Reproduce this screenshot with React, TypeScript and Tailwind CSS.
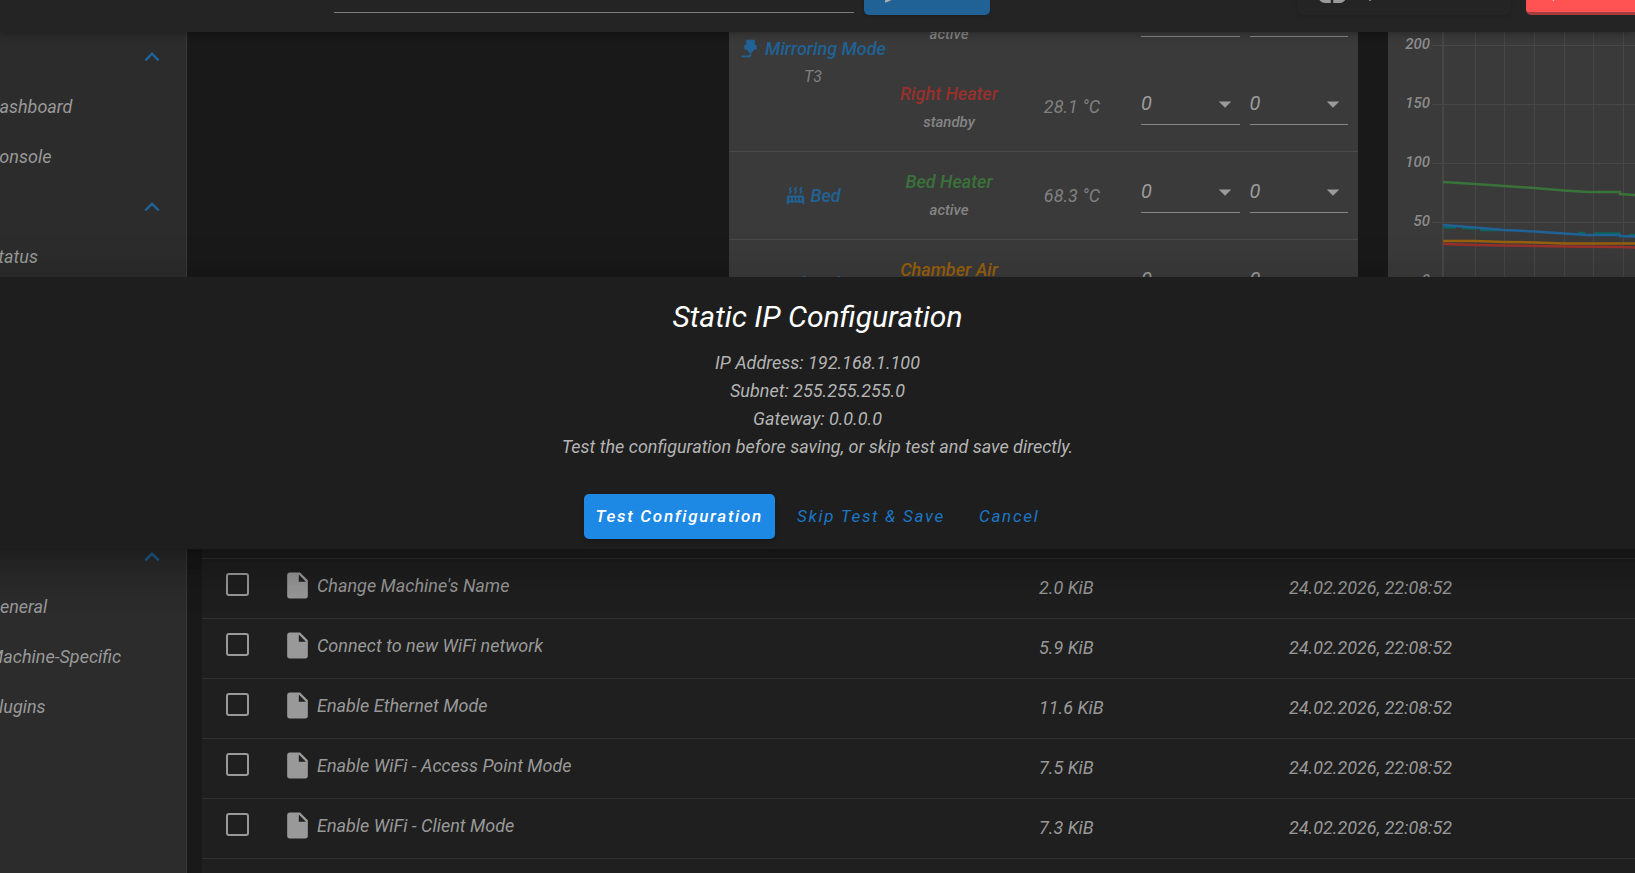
import React, { useState } from 'react';
import { MdArrowDropDown, MdKeyboardArrowUp } from 'react-icons/md';

const files = [
  { name: "Change Machine's Name", size: '2.0 KiB' },
  { name: 'Connect to new WiFi network', size: '5.9 KiB' },
  { name: 'Enable Ethernet Mode', size: '11.6 KiB' },
  { name: 'Enable WiFi - Access Point Mode', size: '7.5 KiB' },
  { name: 'Enable WiFi - Client Mode', size: '7.3 KiB' },
];
const modified = '24.02.2026, 22:08:52';

const gridX = [87, 116, 146, 176, 205, 235];
const ticks = [
  { label: '200', y: 13 },
  { label: '150', y: 72 },
  { label: '100', y: 131 },
  { label: '50', y: 190 },
  { label: '0', y: 249 },
];

// Material Design Icons outlines
const icons = {
  file: 'M13,9V3.5L18.5,9M6,2C4.89,2 4,2.89 4,4V20A2,2 0 0,0 6,22H18A2,2 0 0,0 20,20V8L14,2H6Z',
  nozzle: 'M7,2H17V8H19V13H16.5L13,17H11L7.5,13H5V8H7V2M10,22H2V20H10A1,1 0 0,0 11,19V18H13V19A3,3 0 0,1 10,22Z',
  radiator:
    'M7.95,3L6.53,5.19L7.95,7.4H7.94L5.95,10.5L4.22,9.6L5.64,7.39L4.22,5.19L6.22,2.09L7.95,3M13.95,2.89L12.53,5.1L13.95,7.3L13.94,7.31L11.95,10.4L10.22,9.5L11.64,7.3L10.22,5.1L12.22,2L13.95,2.89M20,2.89L18.56,5.1L20,7.3V7.31L18,10.4L16.25,9.5L17.67,7.3L16.25,5.1L18.25,2L20,2.89M2,22V14A2,2 0 0,1 4,12H20A2,2 0 0,1 22,14V22H20V20H4V22H2M6,14A1,1 0 0,0 5,15V17A1,1 0 0,0 6,18A1,1 0 0,0 7,17V15A1,1 0 0,0 6,14M10,14A1,1 0 0,0 9,15V17A1,1 0 0,0 10,18A1,1 0 0,0 11,17V15A1,1 0 0,0 10,14M14,14A1,1 0 0,0 13,15V17A1,1 0 0,0 14,18A1,1 0 0,0 15,17V15A1,1 0 0,0 14,14M18,14A1,1 0 0,0 17,15V17A1,1 0 0,0 18,18A1,1 0 0,0 19,17V15A1,1 0 0,0 18,14Z',
  chamber: 'M3,8H21V20H3V8M5,10V18H19V10H5Z',
  send: 'M2,21L23,12L2,3V10L17,12L2,14V21Z',
  upload:
    'M11 20H6.5Q4.22 20 2.61 18.43 1 16.85 1 14.58 1 12.63 2.17 11.1 3.35 9.57 5.25 9.15 5.88 6.85 7.75 5.43 9.63 4 12 4 14.93 4 16.96 6.04 19 8.07 19 11 20.73 11.2 21.86 12.5 23 13.78 23 15.5 23 17.38 21.69 18.69 20.38 20 18.5 20H13V12.85L14.6 14.4 16 13 12 9 8 13 9.4 14.4 11 12.85Z',
  flash: 'M7,2V13H10V22L17,10H13L17,2H7Z',
};

const Icon = ({ path, className }: { path: string; className: string }) => (
  <svg viewBox="0 0 24 24" className={`shrink-0 fill-current ${className}`} aria-hidden="true">
    <path d={path} />
  </svg>
);

const NavGroup = ({ title, items }: { title: string; items: string[] }) => (
  <div>
    <button className="flex h-[50px] w-full items-center justify-end pr-[19px] text-[#206296]" aria-label={title}>
      <MdKeyboardArrowUp size={30} />
    </button>
    {items.map((item) => (
      <a key={item} href="#" className="-ml-3 flex h-[50px] items-center pb-0.5">
        {item}
      </a>
    ))}
  </div>
);

const TempSelect = ({ label }: { label: string }) => (
  <span className="relative block h-10 flex-1 border-b border-[#858585]">
    <select aria-label={label} className="h-9 w-full appearance-none bg-transparent text-[20px] italic text-[#9b9b9b] outline-none">
      <option>0</option>
    </select>
    <MdArrowDropDown size={30} className="pointer-events-none absolute right-0 top-1 text-[#9b9b9b]" />
  </span>
);

interface HeaterProps {
  name: string;
  color: string;
  state: string;
  temp: string;
}

const HeaterCells = ({ name, color, state, temp }: HeaterProps) => (
  <>
    <td className="pt-0.5 text-center">
      <a href="#" className={`block leading-7 font-medium ${color}`}>{name}</a>
      <span className="block text-[15px] leading-7 font-medium text-[#848484]">{state}</span>
    </td>
    <td className="pl-3 text-center text-[#808080]">{temp}</td>
    <td className="px-[10px] pb-1">
      <div className="flex gap-[10px]">
        <TempSelect label={`${name} active temperature`} />
        <TempSelect label={`${name} standby temperature`} />
      </div>
    </td>
  </>
);

const TemperatureTable = () => (
  <table className="-mt-[57px] w-full table-fixed border-collapse">
    <colgroup>
      <col className="w-[168px]" />
      <col className="w-[104px]" />
      <col className="w-[130px]" />
      <col />
    </colgroup>
    <tbody>
      <tr className="h-[88px]">
        <td rowSpan={2} className="text-center">
          <a href="#" className="flex items-center justify-center gap-1 leading-7 font-medium text-[#206296]">
            <Icon path={icons.nozzle} className="size-[21px]" />
            Mirroring Mode
          </a>
          <span className="block text-[16px] leading-7 text-[#808080]">T3</span>
        </td>
        <HeaterCells name="Left Heater" color="text-[#206296]" state="active" temp="28.1 °C" />
      </tr>
      <tr className="h-[88px]">
        <HeaterCells name="Right Heater" color="text-[#98302c]" state="standby" temp="28.1 °C" />
      </tr>
      <tr className="h-[88px] border-y border-[#4a4a4a]">
        <td>
          <a href="#" className="flex items-center justify-center gap-1 font-medium text-[#206296]">
            <Icon path={icons.radiator} className="size-[21px]" />
            Bed
          </a>
        </td>
        <HeaterCells name="Bed Heater" color="text-[#397339]" state="active" temp="68.3 °C" />
      </tr>
      <tr className="h-[88px]">
        <td>
          <a href="#" className="flex items-center justify-center gap-1 font-medium text-[#206296]">
            <Icon path={icons.chamber} className="size-[21px]" />
            Chamber
          </a>
        </td>
        <HeaterCells name="Chamber Air" color="text-[#985f0c]" state="active" temp="n/a" />
      </tr>
    </tbody>
  </table>
);

const TemperatureChart = () => (
  <svg className="block h-[300px] w-full" role="img" aria-label="Temperature chart">
    <g stroke="#474747" strokeWidth="1">
      {ticks.map((t) => (
        <line key={t.label} x1="44" x2="100%" y1={t.y + 0.5} y2={t.y + 0.5} />
      ))}
      {gridX.map((x) => (
        <line key={x} x1={x + 0.5} x2={x + 0.5} y1="0" y2="249" />
      ))}
      <line x1="55" x2="55" y1="0" y2="249" strokeWidth="2" />
    </g>
    <g className="fill-[#8c8c8c] text-[15px] font-medium" textAnchor="end">
      {ticks.map((t) => (
        <text key={t.label} x="42" y={t.y + 4}>{t.label}</text>
      ))}
    </g>
    <g fill="none" strokeWidth="2.5">
      <path stroke="#397339" d="M55,150 L87,152 L116,154 L146,156 L176,158.5 L200,160 H232 V162 L247,163 H600" />
      <path stroke="#0c6659" d="M55,195.5 H68 M74,196 L88,196.5 M92,198 L112,198 M190,201 H197 M206,201.5 H232 M241,203 H247" />
      <path stroke="#206296" d="M55,193 L87,195.5 L116,198 L146,199.5 L176,201.5 L200,203 H232 V204 L247,204.5 H600" />
      <path stroke="#98302c" d="M55,212 L87,213 L116,213.5 L176,214.5 L232,215 L247,215.5 H600" />
      <path stroke="#985f0c" d="M55,209 H87 L116,210 L146,210.5 L176,211.5 H600" />
    </g>
  </svg>
);

const FileTable = () => (
  <table className="w-full table-fixed border-collapse">
    <colgroup>
      <col className="w-[68px]" />
      <col className="w-[749px]" />
      <col className="w-[250px]" />
      <col />
    </colgroup>
    <tbody>
      {files.map((file) => (
        <tr key={file.name} className="h-[60px] border-t border-[#303030]">
          <td className="pb-2 pl-6">
            <input
              type="checkbox"
              aria-label={file.name}
              className="block size-[23px] appearance-none rounded-[3px] border-2 border-[#999]"
            />
          </td>
          <td className="pb-[7px] pl-3">
            <a href="#" className="flex items-center gap-1">
              <Icon path={icons.file} className="size-[31px]" />
              {file.name}
            </a>
          </td>
          <td className="pb-0.5 pl-5">{file.size}</td>
          <td className="pb-0.5 pl-5">{modified}</td>
        </tr>
      ))}
      <tr className="h-[60px] border-t border-[#303030]">
        <td className="pb-2 pl-6">
          <input
            type="checkbox"
            aria-label="Select file"
            className="block size-[23px] appearance-none rounded-[3px] border-2 border-[#999]"
          />
        </td>
        <td colSpan={3} />
      </tr>
    </tbody>
  </table>
);

const TopBar = () => (
  <header className="relative z-10 flex h-8 shrink-0 items-end overflow-hidden bg-[#242424] pb-[17px] shadow-[0_2px_8px_rgba(0,0,0,0.3)]">
    <input aria-label="Send code" className="mb-0.5 ml-[334px] h-[45px] w-[520px] shrink-0 border-b border-[#7d7d7d] bg-transparent outline-none" />
    <button aria-label="Send" className="ml-[10px] flex h-[45px] w-[126px] shrink-0 items-center rounded-[5px] bg-[#206296] pl-[19px] text-[#b3b3b3] shadow">
      <Icon path={icons.send} className="size-[26px]" />
    </button>
    <span className="flex-1" />
    <button className="mr-[15px] flex h-[45px] w-[214px] shrink-0 items-center gap-[10px] rounded-[5px] bg-[#242424] pl-5 text-[17px] tracking-widest text-[#999] shadow-sm">
      <Icon path={icons.upload} className="size-[30px]" />
      Upload
    </button>
    <button
      aria-label="Emergency Stop"
      className="flex h-[45px] w-[109px] shrink-0 items-center rounded-l-[5px] border-b-[3px] border-[#a83b3b] bg-[#ff5252] pl-4 text-white"
    >
      <Icon path={icons.flash} className="size-[26px]" />
    </button>
  </header>
);

const ConfirmDialog = () => {
  const [open, setOpen] = useState(true);
  if (!open) return null;

  return (
    <div
      role="dialog"
      aria-labelledby="dialog-title"
      className="absolute -inset-x-24 top-[277px] z-20 flex flex-col items-center bg-[#1e1e1e] pt-[18px] pb-[10px] shadow-[0_11px_15px_-7px_rgba(0,0,0,0.2),0_24px_38px_3px_rgba(0,0,0,0.14),0_9px_46px_8px_rgba(0,0,0,0.12)]"
    >
      <h1 id="dialog-title" className="text-[30px] leading-[44px] text-white">Static IP Configuration</h1>
      <p className="mt-[10px] text-center text-[18px] leading-7 text-[#b4b4b4]">
        IP Address: 192.168.1.100
        <br />
        Subnet: 255.255.255.0
        <br />
        Gateway: 0.0.0.0
        <br />
        Test the configuration before saving, or skip test and save directly.
      </p>
      <div className="mt-[33px] flex h-[45px] gap-[10px] text-[17px] tracking-widest">
        <button onClick={() => setOpen(false)} className="rounded-[5px] bg-[#1e88e5] px-3 font-medium text-white shadow-md">
          Test Configuration
        </button>
        <button onClick={() => setOpen(false)} className="px-3 text-[#1b76c6]">Skip Test &amp; Save</button>
        <button onClick={() => setOpen(false)} className="px-3 text-[#1b76c6]">Cancel</button>
      </div>
    </div>
  );
};

export default function App() {
  return (
    <div className="relative flex h-screen flex-col overflow-hidden bg-[#191919] font-['Roboto',sans-serif] text-[18px] text-[#999] italic">
      <TopBar />
      <div className="flex min-h-0 flex-1">
        <nav className="flex w-[187px] shrink-0 flex-col border-r border-[#3a3a3a] bg-[#2c2c2c]">
          <NavGroup title="Machine Control" items={['Dashboard', 'Console']} />
          <NavGroup title="Machine Status" items={['Status']} />
          <div className="h-[250px]" />
          <NavGroup title="Settings" items={['General', 'Machine-Specific', 'Plugins']} />
        </nav>
        <main className="min-w-0 flex-1">
          <div className="ml-[542px] flex gap-[30px]">
            <section className="h-[300px] w-[629px] shrink-0 overflow-hidden bg-[#3a3a3a]">
              <TemperatureTable />
            </section>
            <section className="h-[300px] min-w-0 flex-1 overflow-hidden bg-[#3a3a3a]">
              <TemperatureChart />
            </section>
          </div>
          <section className="mt-[30px] ml-[15px] bg-[#1f1f1f] pt-[196px]">
            <FileTable />
          </section>
        </main>
      </div>
      <ConfirmDialog />
    </div>
  );
}
